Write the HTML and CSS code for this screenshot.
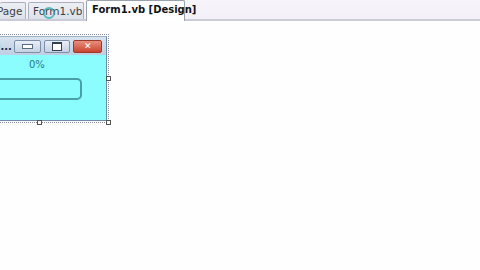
FILE: index.html
```html
<!DOCTYPE html>
<html>
<head>
<meta charset="utf-8">
<link rel="stylesheet" href="styles.css">
</head>
<body>
<div class="tabstrip">
  <div class="tab tab-page">Page</div>
  <div class="tab tab-code">Form1.vb</div>
  <div class="tab tab-active">Form1.vb [Design]</div>
</div>
<div class="canvas">
  <div class="cursor"></div>
  <div class="form">
    <div class="titlebar">
      <span class="ttl">l...</span>
      <span class="btn btn-min"><span class="min-glyph"></span></span>
      <span class="btn btn-max"><span class="max-glyph"></span></span>
      <span class="btn btn-close">✕</span>
    </div>
    <div class="client">
      <div class="pct">0%</div>
      <div class="bar"></div>
    </div>
  </div>
  <div class="handle h-right"></div>
  <div class="handle h-bottom"></div>
  <div class="handle h-corner"></div>
</div>
</body>
</html>
```
FILE: styles.css
```css
html, body { margin: 0; padding: 0; }
body {
  width: 480px; height: 270px; overflow: hidden;
  background: #fefefe;
  font-family: "DejaVu Sans", "Liberation Sans", sans-serif;
}
.tabstrip {
  height: 19px;
  display: flex;
  align-items: flex-end;
  background: linear-gradient(#f7f5fb, #f3f0f8);
  border-bottom: 2px solid #c9ccd6;
  box-sizing: content-box;
}
.tab {
  height: 17px;
  font-size: 10.5px;
  line-height: 16px;
  color: #3c4048;
  box-sizing: border-box;
  border: 1px solid #a9afbb;
  border-bottom: none;
  border-radius: 2px 2px 0 0;
  background: linear-gradient(#eceff4, #dde2ea);
  white-space: nowrap;
}
.tab-page { width: 26px; padding-left: 0; text-indent: -3px; overflow: hidden; border-left: none; }
.tab-code { width: 56px; margin-left: 2px; padding-left: 4px; }
.tab-active {
  width: 99px; height: 19px; margin-left: 2px; padding-left: 5px;
  background: #ffffff; color: #101418; font-weight: bold; font-size: 10px;
  line-height: 18px; border-color: #9aa2ae;
  margin-bottom: -2px; height: 21px;
}
.canvas { position: relative; height: 249px; }
.cursor {
  position: absolute; left: 43px; top: -14px; width: 12px; height: 12px;
  border-radius: 50%; border: 2px solid rgba(40,170,180,0.75);
  box-sizing: border-box;
}
.form {
  position: absolute; left: -4px; top: 15px; width: 111px; height: 85px;
  border: 1px solid #6f8aa8;
  border-top-color: #9fb3c8;
  outline: 1px dotted #8a8f99;
  outline-offset: 1px;
  display: flex; flex-direction: column;
  box-sizing: border-box;
}
.titlebar {
  height: 18px;
  background: linear-gradient(#d9e3ef, #bfcee2);
  display: flex; align-items: center; gap: 3px;
  padding: 0 4px 0 0;
}
.ttl { width: 14px; font-size: 10px; color: #202a38; font-weight: bold; text-align: right; }
.btn {
  height: 13px; box-sizing: border-box;
  border: 1px solid #7d8ea8; border-radius: 2px;
  background: linear-gradient(#e9eef6, #c5d1e2);
  display: flex; align-items: center; justify-content: center;
}
.btn-min { width: 27px; }
.btn-max { width: 27px; }
.btn-close {
  width: 29px; background: linear-gradient(#e88f7e, #c8452f);
  border-color: #9a3a2a; color: #fff; font-size: 9px; font-weight: bold;
}
.min-glyph { width: 9px; height: 3px; background: #fff; border: 1px solid #5a6a80; }
.max-glyph { width: 8px; height: 6px; border: 1px solid #33404f; border-top-width: 2px; background: #fff; }
.client {
  flex: 1;
  background: #8cfdff;
  display: flex; flex-direction: column; align-items: flex-start;
}
.pct {
  font-size: 10px; color: #2a7a86; margin: 3px 0 0 32px; height: 13px; line-height: 13px;
}
.bar {
  width: 85px; height: 22px; margin: 7px 0 0 0;
  border: 2px solid #4aa0a6; border-left: none;
  border-radius: 0 5px 5px 0;
  box-sizing: border-box;
}
.handle {
  position: absolute; width: 5px; height: 5px; background: #fff;
  border: 1px solid #555; box-sizing: border-box;
}
.h-right { left: 106px; top: 55px; }
.h-bottom { left: 37px; top: 99px; }
.h-corner { left: 106px; top: 99px; }
```
